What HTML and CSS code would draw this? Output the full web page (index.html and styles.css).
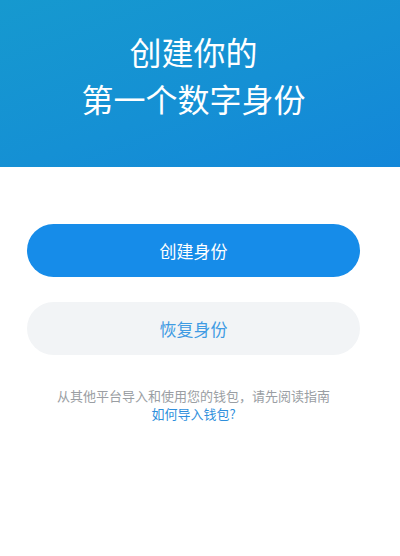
FILE: index.html
```html
<!DOCTYPE html>
<html lang="zh-CN">
<head>
<meta charset="utf-8">
<link rel="stylesheet" href="styles.css">
</head>
<body>
<div class="page">
  <header class="hero">
    <h1 class="title">创建你的<br>第一个数字身份</h1>
  </header>
  <main class="actions">
    <button class="btn btn-primary">创建身份</button>
    <button class="btn btn-secondary">恢复身份</button>
    <p class="hint">从其他平台导入和使用您的钱包，请先阅读指南<br><a class="link">如何导入钱包?</a></p>
  </main>
</div>
</body>
</html>
```
FILE: styles.css
```css
html, body {
  margin: 0;
  padding: 0;
  background: #ffffff;
}
body {
  font-family: "Noto Sans CJK SC", "Noto Sans", sans-serif;
  width: 400px;
  height: 556px;
  overflow: hidden;
}
.page {
  width: 400px;
}
.hero {
  height: 167px;
  box-sizing: border-box;
  padding-top: 28px;
  background: linear-gradient(160deg, #1699cf 0%, #1590d4 55%, #1387d9 100%);
  padding-right: 13px;
}
.title {
  margin: 0;
  text-align: center;
  color: #ffffff;
  font-size: 32px;
  font-weight: 400;
  line-height: 47px;
}
.actions {
  display: flex;
  flex-direction: column;
  padding: 57px 40px 0 27px;
}
.btn {
  height: 53px;
  border: none;
  border-radius: 27px;
  font-family: inherit;
  font-size: 17px;
  padding: 0;
  width: 333px;
}
.btn-primary {
  background: #168ce9;
  color: #ffffff;
}
.btn-secondary {
  margin-top: 25px;
  background: #f2f4f6;
  color: #3f9be3;
}
.hint {
  margin: 32px 0 0;
  text-align: center;
  font-size: 13px;
  line-height: 18px;
  color: #9a9ea3;
}
.link {
  color: #2f8fdc;
}
```
